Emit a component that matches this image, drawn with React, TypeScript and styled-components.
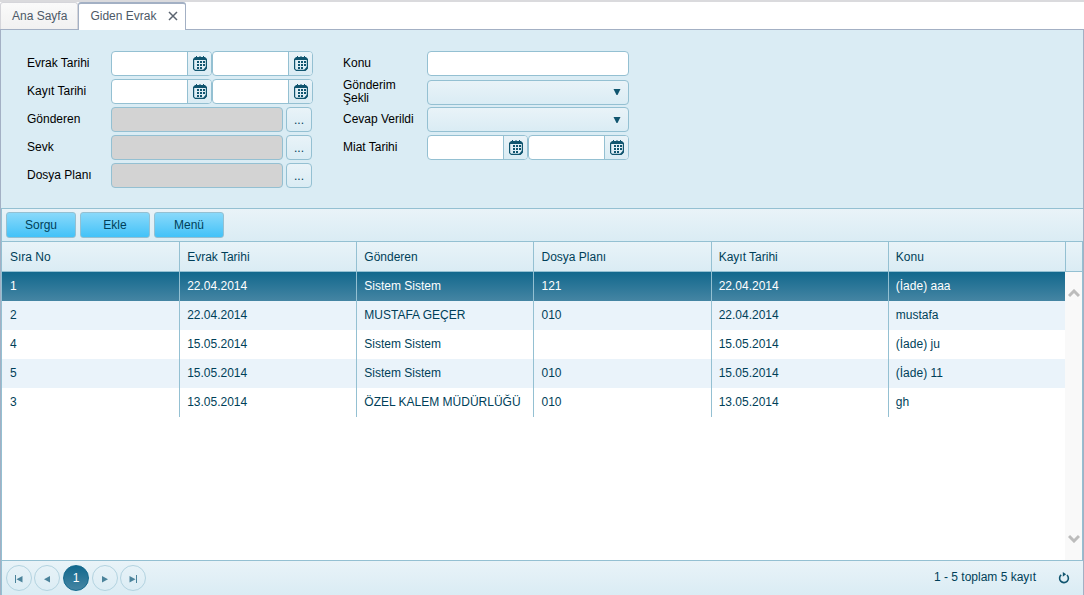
import React from "react";
import styled, { createGlobalStyle, css } from "styled-components";

const line = "#94c0d2";
const ink = "#003f59";
const soft = "linear-gradient(#e9f3f8, #daecf4)";
const font = `"Liberation Sans", Arial, sans-serif`;

const Global = createGlobalStyle`
  * { box-sizing: border-box; }
  body { margin: 0; background: #fff; }
  body, button, input, select { font-family: ${font}; font-size: 12px; color: ${ink}; }
`;

const Page = styled.div`
  display: flex;
  flex-direction: column;
  min-height: 100vh;
  border-top: 2px solid #dadadd;
`;

const TabBar = styled.nav`
  display: flex;
  align-items: flex-end;
  height: 28px;
  border-bottom: 1px solid #a3b0c4;
`;

const Tab = styled.div<{ $active?: boolean }>`
  display: flex;
  align-items: center;
  gap: 12px;
  height: 27px;
  padding: 0 10px 0 11px;
  border: 1px solid #d5d5da;
  border-bottom: 0;
  border-radius: 3px 3px 0 0;
  background: linear-gradient(#fafafa, #f1f1f1);
  ${(p) =>
    p.$active &&
    css`
      height: 28px;
      margin-bottom: -1px;
      padding: 0 7px 2px 11px;
      border-color: #a3b0c4;
      border-top-width: 2px;
      background: #fff;
    `}
`;

const TabLink = styled.a`
  color: #4d5967;
  text-decoration: none;
`;

const CloseButton = styled.button`
  display: flex;
  padding: 0;
  border: 0;
  background: none;
`;

const Panel = styled.main`
  flex: 1;
  display: flex;
  flex-direction: column;
  border-left: 1px solid #a3b0c4;
  border-right: 1px solid #a3b0c4;
  background: #daecf4;
`;

const Filters = styled.form`
  display: flex;
  gap: 30px;
  padding: 21px 26px 20px;
`;

const FieldColumn = styled.div`
  display: flex;
  flex-direction: column;
  gap: 3px;
`;

const Field = styled.div`
  display: grid;
  grid-template-columns: 74px 202px;
  column-gap: 10px;
  align-items: center;
  height: 25px;
  line-height: 13px;
  color: #000;
`;

const Controls = styled.div`
  display: flex;
  height: 25px;
`;

const control = css`
  min-width: 0;
  height: 25px;
  border: 1px solid ${line};
  border-radius: 4px;
  outline: 0;
`;

const TextBox = styled.input`
  ${control}
  flex: 1;
  padding: 0 6px;
  background: #fff;
  &:disabled {
    margin-right: 3px;
    background: #d3d3d3;
  }
`;

const DateBox = styled.div`
  ${control}
  flex: 1;
  display: flex;
  overflow: hidden;
  background: #fff;
`;

const DateInput = styled.input`
  flex: 1;
  min-width: 0;
  padding: 0 6px;
  border: 0;
  outline: 0;
  background: transparent;
`;

const DateButton = styled.button`
  display: grid;
  place-items: center;
  width: 24px;
  padding: 0;
  border: 0;
  border-left: 1px solid ${line};
  background: ${soft};
`;

const MoreButton = styled.button`
  ${control}
  width: 26px;
  margin-right: 1px;
  padding: 0;
  background: ${soft};
`;

const SelectWrap = styled.div`
  ${control}
  flex: 1;
  display: flex;
  align-items: center;
  padding-right: 7px;
  background: ${soft};
`;

const Select = styled.select`
  flex: 1;
  height: 23px;
  border: 0;
  outline: 0;
  appearance: none;
  background: transparent;
`;

const Grid = styled.section`
  flex: 1;
  display: flex;
  flex-direction: column;
  border: solid ${line};
  border-width: 1px 0 0 1px;
  background: #fff;
`;

const Toolbar = styled.div`
  display: flex;
  gap: 4px;
  padding: 3px 4px;
  border-bottom: 1px solid ${line};
  background: ${soft};
`;

const ActionButton = styled.button`
  width: 70px;
  height: 26px;
  padding: 0;
  border: 1px solid ${line};
  border-radius: 3px;
  background: linear-gradient(#89d9fa, #43c2f8);
`;

const Content = styled.div`
  flex: 1;
  display: flex;
`;

const TableArea = styled.div`
  flex: 1;
`;

const Table = styled.table`
  width: 100%;
  table-layout: fixed;
  border-collapse: separate;
  border-spacing: 0;
`;

const HeadCell = styled.th`
  height: 30px;
  padding: 0 7px;
  border: solid ${line};
  border-width: 0 0 1px 1px;
  background: ${soft};
  font-weight: normal;
  text-align: left;
  white-space: nowrap;
  &:first-child { border-left-width: 0; padding-left: 8px; }
`;

const Row = styled.tr<{ $selected: boolean }>`
  background: #fff;
  &:nth-child(even) { background: #eaf3fa; }
  ${(p) =>
    p.$selected &&
    css`
      color: #fff;
      background: linear-gradient(#12688d, #4585a3);
    `}
`;

const Cell = styled.td`
  height: 29px;
  padding: 0 7px 2px;
  border-left: 1px solid ${line};
  white-space: nowrap;
  &:first-child { border-left-width: 0; padding-left: 8px; }
`;

const Rail = styled.div`
  display: flex;
  flex-direction: column;
  width: 18px;
  border-right: 1px solid ${line};
  background: #f9f9f9;
`;

const RailHead = styled.div`
  height: 30px;
  border: solid ${line};
  border-width: 0 0 1px 1px;
  background: ${soft};
`;

const Track = styled.div`
  flex: 1;
  display: flex;
  flex-direction: column;
  align-items: center;
  justify-content: space-between;
  padding: 17px 0;
`;

const Pager = styled.footer`
  display: flex;
  align-items: center;
  gap: 2px;
  height: 35px;
  padding: 0 13px 0 4px;
  border-top: 1px solid ${line};
  background: ${soft};
`;

const PageButton = styled.button<{ $current?: boolean }>`
  display: grid;
  place-items: center;
  width: 26px;
  height: 26px;
  padding: 0;
  border: 1px solid #b3d3e0;
  border-radius: 50%;
  background: transparent;
  ${(p) =>
    p.$current &&
    css`
      margin: 0 1px;
      border-color: #12688d;
      color: #fff;
      background: linear-gradient(#12688d, #4585a3);
    `}
`;

const Summary = styled.span`
  margin-left: auto;
  padding-bottom: 2px;
`;

const RefreshButton = styled.button`
  display: flex;
  margin-left: 20px;
  padding: 0;
  border: 0;
  background: none;
`;

const CalendarIcon = () => (
  <svg width="14" height="15" viewBox="0 0 14 15" fill="#10556f">
    <path
      fillRule="evenodd"
      d="M2 1h1V0h1v1h2.500V0h1v1H10V0h1v1h1l2 2v9.500L11.500 15H2l-2-2V3z M1.200 4v8.800l1 1H11l1.800-1.800V4z"
    />
    <path d="M4 5h2v2H4z M7 5h2v2H7z M10 5h2v2h-2z M4 8h2v2H4z M7 8h2v2H7z M10 8h2v2h-2z M4 11h2v2H4z M7 11h2v2H7z M13 10.500v3.500h-3z" />
  </svg>
);

const DateField = ({ label }: { label: string }) => (
  <DateBox>
    <DateInput aria-label={label} />
    <DateButton type="button" aria-label={`${label} takvim`}>
      <CalendarIcon />
    </DateButton>
  </DateBox>
);

const DateRange = ({ label }: { label: string }) => (
  <Field role="group" aria-label={label}>
    <span>{label}</span>
    <Controls>
      <DateField label={`${label} ilk`} />
      <DateField label={`${label} son`} />
    </Controls>
  </Field>
);

const Lookup = ({ id, label }: { id: string; label: string }) => (
  <Field>
    <label htmlFor={id}>{label}</label>
    <Controls>
      <TextBox id={id} disabled />
      <MoreButton type="button" aria-label={`${label} seç`}>...</MoreButton>
    </Controls>
  </Field>
);

const Choice = ({ id, label }: { id: string; label: string }) => (
  <Field>
    <label htmlFor={id}>{label}</label>
    <Controls>
      <SelectWrap>
        <Select id={id}>
          <option value="" />
        </Select>
        <svg width="8" height="6" viewBox="0 0 8 6" fill="#10556f">
          <path d="M.5 0h7L4.500 6h-1z" />
        </svg>
      </SelectWrap>
    </Controls>
  </Field>
);

const Chevron = ({ d }: { d: string }) => (
  <svg width="12" height="9" viewBox="0 0 12 9" fill="none" stroke="#bcbcbc" strokeWidth="3">
    <path d={d} />
  </svg>
);

const PagerIcon = ({ d }: { d: string }) => (
  <svg width="8" height="10" viewBox="0 0 8 10" fill="#4b839b">
    <path d={d} />
  </svg>
);

const columns = ["Sıra No", "Evrak Tarihi", "Gönderen", "Dosya Planı", "Kayıt Tarihi", "Konu"];
const rows = [
  ["1", "22.04.2014", "Sistem Sistem", "121", "22.04.2014", "(İade) aaa"],
  ["2", "22.04.2014", "MUSTAFA GEÇER", "010", "22.04.2014", "mustafa"],
  ["4", "15.05.2014", "Sistem Sistem", "", "15.05.2014", "(İade) ju"],
  ["5", "15.05.2014", "Sistem Sistem", "010", "15.05.2014", "(İade) 11"],
  ["3", "13.05.2014", "ÖZEL KALEM MÜDÜRLÜĞÜ", "010", "13.05.2014", "gh"],
];

export default function App() {
  return (
    <Page>
      <Global />
      <TabBar>
        <Tab>
          <TabLink href="#ana-sayfa">Ana Sayfa</TabLink>
        </Tab>
        <Tab $active>
          <TabLink href="#giden-evrak">Giden Evrak</TabLink>
          <CloseButton aria-label="Kapat">
            <svg width="10" height="10" viewBox="0 0 10 10" stroke="#5b6470" strokeWidth="1.5">
              <path d="M1 1l8 8M9 1L1 9" />
            </svg>
          </CloseButton>
        </Tab>
      </TabBar>
      <Panel>
        <Filters>
          <FieldColumn>
            <DateRange label="Evrak Tarihi" />
            <DateRange label="Kayıt Tarihi" />
            <Lookup id="gonderen" label="Gönderen" />
            <Lookup id="sevk" label="Sevk" />
            <Lookup id="dosya" label="Dosya Planı" />
          </FieldColumn>
          <FieldColumn>
            <Field>
              <label htmlFor="konu">Konu</label>
              <Controls>
                <TextBox id="konu" />
              </Controls>
            </Field>
            <Choice id="sekil" label="Gönderim Şekli" />
            <Choice id="cevap" label="Cevap Verildi" />
            <DateRange label="Miat Tarihi" />
          </FieldColumn>
        </Filters>
        <Grid>
          <Toolbar>
            <ActionButton>Sorgu</ActionButton>
            <ActionButton>Ekle</ActionButton>
            <ActionButton>Menü</ActionButton>
          </Toolbar>
          <Content>
            <TableArea>
              <Table>
                <thead>
                  <tr>
                    {columns.map((c) => (
                      <HeadCell key={c} scope="col">{c}</HeadCell>
                    ))}
                  </tr>
                </thead>
                <tbody>
                  {rows.map((r, i) => (
                    <Row key={r[0]} $selected={i === 0}>
                      {r.map((v, j) => (
                        <Cell key={j}>{v}</Cell>
                      ))}
                    </Row>
                  ))}
                </tbody>
              </Table>
            </TableArea>
            <Rail>
              <RailHead />
              <Track>
                <Chevron d="M1 7l5-5 5 5" />
                <Chevron d="M1 2l5 5 5-5" />
              </Track>
            </Rail>
          </Content>
          <Pager>
            <PageButton aria-label="İlk sayfa"><PagerIcon d="M0 2h1v8H0z M7.500 3v6.500L1.500 6.300z" /></PageButton>
            <PageButton aria-label="Önceki sayfa"><PagerIcon d="M7 3v6.500L1 6.300z" /></PageButton>
            <PageButton $current>1</PageButton>
            <PageButton aria-label="Sonraki sayfa"><PagerIcon d="M1 3v6.500l6-3.200z" /></PageButton>
            <PageButton aria-label="Son sayfa"><PagerIcon d="M7 2h1v8H7z M.5 3v6.500l6-3.200z" /></PageButton>
            <Summary>1 - 5 toplam 5 kayıt</Summary>
            <RefreshButton aria-label="Yenile">
              <svg width="12" height="12" viewBox="0 0 12 12">
                <path d="M3.200 2.800A4.400 4.400 0 1 0 9 3" fill="none" stroke="#10556f" strokeWidth="1.600" />
                <path d="M5.800 0L2.500 2.600l3.300 2.200z" fill="#10556f" transform="rotate(180 5.300 2.400)" />
              </svg>
            </RefreshButton>
          </Pager>
        </Grid>
      </Panel>
    </Page>
  );
}
